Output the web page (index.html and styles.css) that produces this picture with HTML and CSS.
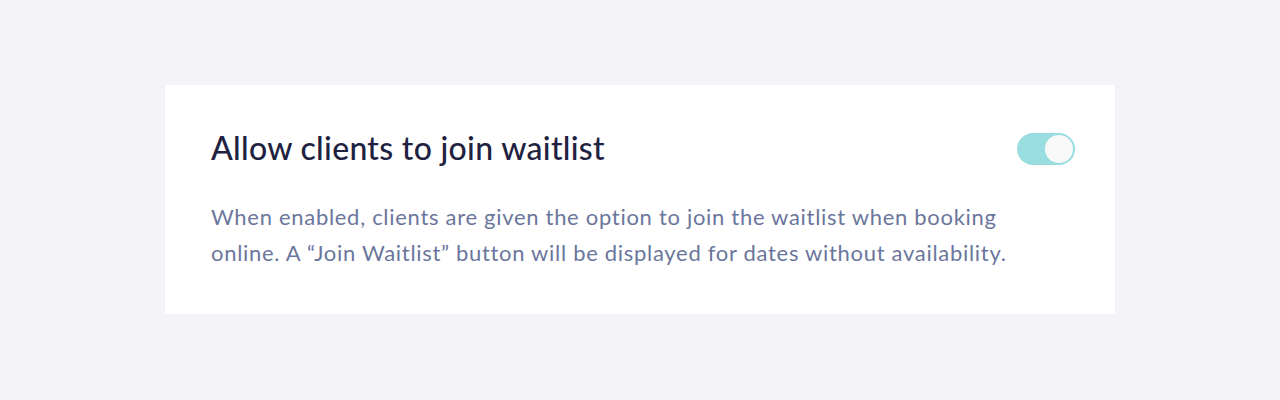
FILE: index.html
```html
<!DOCTYPE html>
<html>
<head>
  <meta charset="utf-8">
  <title>Waitlist settings</title>
  <link rel="stylesheet" href="styles.css">
</head>
<body>
    <main>
        <section class="card">
            <div class="head">
                <h2>Allow clients to join waitlist</h2>
                <label class="toggle">
                    <input type="checkbox" checked>
                    <span class="track"><span class="knob"></span></span>
                </label>
            </div>
            <p>When enabled, clients are given the option to join the waitlist when booking online. A &ldquo;Join Waitlist&rdquo; button will be displayed for dates without availability.</p>
        </section>
    </main>
</body>
</html>
```

FILE: styles.css
```css
*{font-family:Lato,'Noto Sans',sans-serif;box-sizing:border-box}
body {
    margin: 0;
    padding: 0;
    background-color: #f3f3f8;
}
main {
    height: 400px;
    padding: 85px 165px;
}
.card {
    background-color: white;
    height: 229px;
    padding: 43px 40px 0 46px;
}
.head {
    display: flex;
    justify-content: space-between;
    align-items: center;
}
h2 {
    margin: 0;
    font-size: 32px;
    font-weight: 500;
    letter-spacing: 0.3px;
    color: #1e2240;
    line-height: 40px;
}
.toggle input {
    display: none;
}
.track {
    display: block;
    width: 58px;
    height: 32px;
    margin-top: 2px;
    border-radius: 16px;
    background-color: #9adde0;
    padding: 2px;
}
.knob {
    display: block;
    width: 28px;
    height: 28px;
    margin-left: 26px;
    border-radius: 50%;
    background-color: #f8f8f8;
}
p {
    margin: 31px 0 0;
    max-width: 830px;
    font-size: 22px;
    letter-spacing: 0.7px;
    line-height: 36px;
    color: #6b769c;
}
```
